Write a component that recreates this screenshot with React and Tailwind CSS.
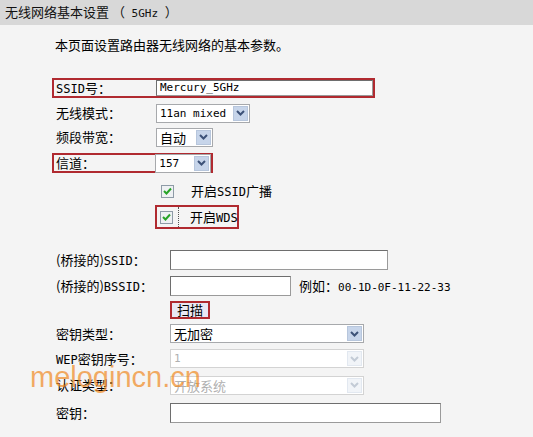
import React from "react";

const CJK = { fontFamily: '"Noto Sans CJK SC", "Noto Sans", sans-serif' };

function M({ children, className = "text-[12px]" }) {
  return (
    <span className={className} style={{ fontFamily: '"DejaVu Sans Mono", "Liberation Mono", monospace' }}>
      {children}
    </span>
  );
}

function Chevron({ color }) {
  return (
    <svg width="9" height="6" viewBox="0 0 9 6">
      <path d="M1 1 L4.5 4.5 L8 1" fill="none" stroke={color} strokeWidth="2" />
    </svg>
  );
}

function Select({ w, children, disabled }) {
  return (
    <div
      className={
        "flex h-[19px] items-center border bg-white " +
        (disabled ? "border-[#d3d3d3] text-[#b0b0b0]" : "border-[#a7a9ac] text-black")
      }
      style={{ width: w }}
    >
      <div className="flex flex-1 items-center pl-[3px] leading-none">{children}</div>
      <div
        className={
          "mr-[1px] flex h-[15px] w-[15px] items-center justify-center border " +
          (disabled ? "border-[#e2e8f0] bg-[#f1f4f8]" : "border-[#b7c6dc] bg-[#c7d5ea]")
        }
      >
        <Chevron color={disabled ? "#c3cbd6" : "#3d5278"} />
      </div>
    </div>
  );
}

function Input({ w, children, h = 20 }) {
  return (
    <div
      className="flex items-center border border-t-[#6e6e6e] border-l-[#6e6e6e] border-r-[#9a9a9a] border-b-[#9a9a9a] bg-white pl-[3px]"
      style={{ width: w, height: h }}
    >
      {children}
    </div>
  );
}

function Check() {
  return (
    <div className="flex h-[13px] w-[13px] items-center justify-center border border-[#8e9ba7] bg-[#eef1f3]">
      <svg width="9" height="8" viewBox="0 0 9 8">
        <path d="M1 4 L3.5 6.5 L8 1.5" fill="none" stroke="#27a327" strokeWidth="2" />
      </svg>
    </div>
  );
}

export default function App() {
  return (
    <div className="relative h-[437px] w-[533px] overflow-hidden bg-[#f4f4f4] text-[13px] text-black" style={CJK}>
      <div className="flex h-[25px] items-center bg-[#d8d8d8] pl-[5px] text-[13px] text-[#111]">
        <span className="whitespace-nowrap">
          无线网络基本设置 （<M className="text-[11px]"> 5GHz </M>）
        </span>
      </div>

      <div className="ml-[55px] mt-[10px] flex h-[20px] items-center">本页面设置路由器无线网络的基本参数。</div>

      {/* SSID */}
      <div className="ml-[52px] mt-[23px] flex h-[20px] w-[323px] items-center border-2 border-[#b02a30]">
        <div className="w-[102px] whitespace-nowrap pl-[2px]">
          <M>SSID</M>号：
        </div>
        <Input w={217} h={16}>
          <M className="text-[11px]">Mercury_5GHz</M>
        </Input>
      </div>

      <div className="ml-[56px] mt-[3px] flex h-[24px] items-center">
        <div className="w-[100px]">无线模式：</div>
        <Select w={94}>
          <M className="text-[11px]">11an mixed</M>
        </Select>
      </div>

      <div className="ml-[56px] flex h-[24px] items-center">
        <div className="w-[100px]">频段带宽：</div>
        <Select w={57}>自动</Select>
      </div>

      <div className="ml-[52px] mt-[4px] flex h-[20px] w-[161px] items-center border-2 border-[#b02a30]">
        <div className="w-[102px] pl-[2px]">信道：</div>
        <Select w={56}>
          <M className="text-[11px]">157</M>
        </Select>
      </div>

      <div className="ml-[161px] mt-[6px] flex h-[24px] items-center">
        <Check />
        <div className="ml-[17px] whitespace-nowrap">
          开启<M>SSID</M>广播
        </div>
      </div>

      <div className="ml-[155px] mt-[2px] flex h-[24px] w-[84px] items-center border-2 border-[#b02a30]">
        <div className="ml-[3px]">
          <Check />
        </div>
        <div className="ml-[5px] flex h-full items-center border-l border-dotted border-[#555] pl-[11px]">
          <span className="whitespace-nowrap">
            开启<M>WDS</M>
          </span>
        </div>
      </div>

      <div className="ml-[56px] mt-[21px] flex h-[20px] items-center">
        <div className="w-[114px] whitespace-nowrap">
          (桥接的)<M>SSID</M>：
        </div>
        <Input w={218} />
      </div>

      <div className="ml-[56px] mt-[6px] flex h-[20px] items-center">
        <div className="w-[114px] whitespace-nowrap">
          (桥接的)<M>BSSID</M>：
        </div>
        <Input w={121} />
        <div className="ml-[8px] whitespace-nowrap">
          例如：<M className="text-[11px]">00-1D-0F-11-22-33</M>
        </div>
      </div>

      <div className="ml-[170px] mt-[5px] flex h-[18px] w-[40px] items-center justify-center border-2 border-[#b02a30] bg-[#e8e8f4] text-[13px]">
        扫描
      </div>

      <div className="ml-[56px] mt-[5px] flex h-[19px] items-center">
        <div className="w-[114px]">密钥类型：</div>
        <Select w={194}>无加密</Select>
      </div>

      <div className="ml-[56px] mt-[6px] flex h-[19px] items-center">
        <div className="w-[114px] whitespace-nowrap">
          <M>WEP</M>密钥序号：
        </div>
        <Select w={194} disabled>
          <M className="text-[11px]">1</M>
        </Select>
      </div>

      <div className="ml-[56px] mt-[7px] flex h-[20px] items-center">
        <div className="w-[114px]">认证类型：</div>
        <Select w={194} disabled>
          开放系统
        </Select>
      </div>

      <div className="ml-[56px] mt-[8px] flex h-[20px] items-center">
        <div className="w-[114px]">密钥：</div>
        <Input w={271} />
      </div>

      <div
        className="pointer-events-none absolute left-[30px] top-[363px] text-[29px] leading-none text-[rgba(240,140,40,0.72)]"
        style={{ fontFamily: '"Liberation Sans", Arial, sans-serif' }}
      >
        melogincn.cn
      </div>
    </div>
  );
}
